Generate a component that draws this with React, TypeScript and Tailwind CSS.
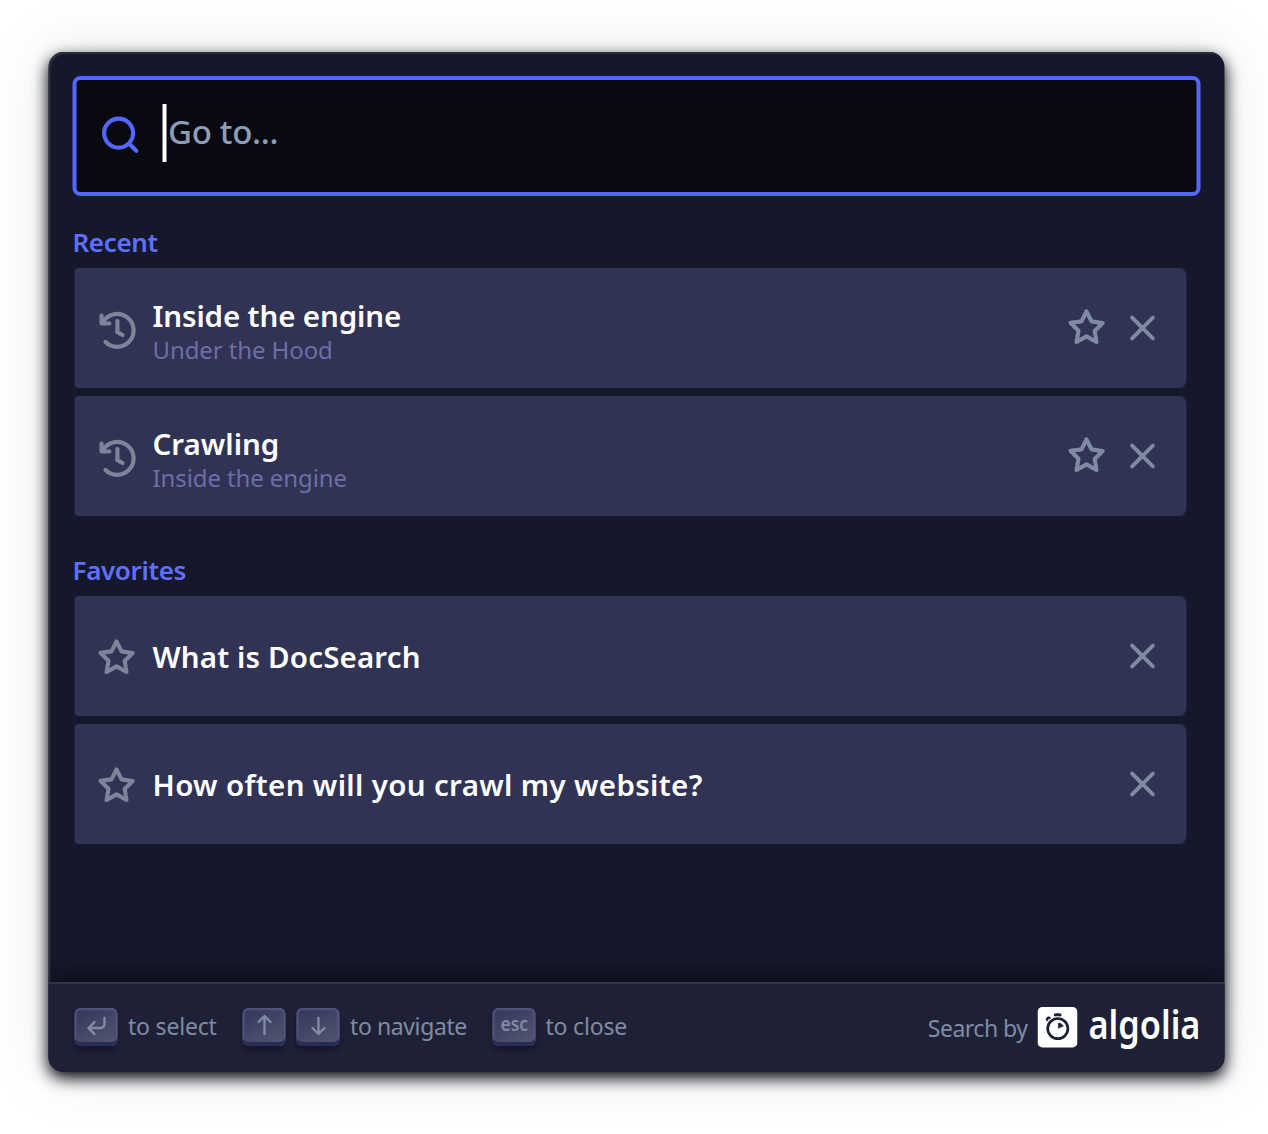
import type { ReactNode } from 'react';

const HistoryIcon = () => (
  <svg width="40" height="40" viewBox="0 0 20 20" fill="none" stroke="currentColor" strokeWidth="2.1" strokeLinecap="round" strokeLinejoin="round">
    <path d="M3.18 6.6a8.23 8.23 0 1112.93 9.94h0a8.23 8.23 0 01-11.63 0" />
    <path d="M6.44 7.25H2.55V3.36M10.45 6v5.6M10.45 11.6L13 13" />
  </svg>
);

const StarIcon = () => (
  <svg width="40" height="40" viewBox="0 0 20 20" fill="none" stroke="currentColor" strokeWidth="2.05" strokeLinejoin="round">
    <path d="M10 14.2L5 17l1-5.6-4-4 5.5-.7 2.5-5 2.5 5 5.6.8-4 4 .9 5.5z" />
  </svg>
);

const CloseIcon = () => (
  <svg width="40" height="40" viewBox="0 0 20 20" fill="none" stroke="currentColor" strokeWidth="1.9" strokeLinecap="round" strokeLinejoin="round">
    <path d="M15.2 4.8L4.8 15.2M4.8 4.8l10.4 10.4" />
  </svg>
);

const SearchIcon = () => (
  <svg width="40" height="40" viewBox="0 0 20 20" fill="none" stroke="currentColor" strokeWidth="2.1" strokeLinecap="round" strokeLinejoin="round">
    <path d="M14.2 14.2l3.7 3.7" />
    <circle cx="9.06" cy="9.06" r="7.25" />
  </svg>
);

const KeyIcon = ({ d }: { d: string }) => (
  <svg width="30" height="30" viewBox="0 0 15 15" fill="none" stroke="currentColor" strokeWidth="1.2" strokeLinecap="round" strokeLinejoin="round">
    <path d={d} />
  </svg>
);

const Key = ({ children }: { children: ReactNode }) => (
  <kbd className="mb-[3px] flex h-[38px] w-[43px] items-center justify-center rounded-[6px] bg-[linear-gradient(-26.5deg,#565872,#31355b)] pb-[2px] font-['Noto_Sans',sans-serif] text-[#7f8ba3] shadow-[inset_0_-4px_0_0_#282d55,inset_0_0_2px_2px_#51577d,0_4px_4px_0_rgba(3,4,9,0.3)]">
    {children}
  </kbd>
);

const AlgoliaLogo = () => (
  <div className="flex items-center text-white">
    <svg className="-mt-[2px]" width="40" height="41" viewBox="0 0 40 41">
      <rect width="40" height="40.5" rx="5" fill="#fff" />
      <circle cx="20.3" cy="21.6" r="10.1" fill="none" stroke="#1e2136" strokeWidth="2.7" />
      <path d="M20.8 21.300v-5.200c2.200.1 4 1.200 5 3z" fill="#1e2136" stroke="#1e2136" strokeWidth=".6" strokeLinejoin="round" />
      <path d="M16.400 9.200V8c0-1 .7-1.700 1.700-1.700h4.200c1 0 1.700.7 1.700 1.700v1.200z" fill="#1e2136" />
      <path d="M9.700 12.800c-.6-1.300.9-2.700 2.300-1.900" fill="none" stroke="#1e2136" strokeWidth="2.400" strokeLinecap="round" />
    </svg>
    <span className="-mt-[9px] ml-[10.5px] inline-block w-[112.5px] origin-left scale-x-[0.88] text-[39px] leading-[54px] font-semibold">algolia</span>
  </div>
);

type Hit = { title: string; subtitle?: string; spacing: string };

const HitRow = ({ hit, favorite }: { hit: Hit; favorite?: boolean }) => (
  <li className="flex h-[120px] items-center rounded-l-[4px] rounded-r-[8px] bg-[#313354] pr-[24px] pl-[22px]">
    <span className={favorite ? 'mt-[4px] text-[#7f849b]' : 'mt-[2px] text-[#7f849b]'}>
      {favorite ? <StarIcon /> : <HistoryIcon />}
    </span>
    <div className={favorite ? 'mt-[2px] ml-[16px] flex-1 whitespace-nowrap' : 'mt-[10px] ml-[16px] flex-1 whitespace-nowrap'}>
      <div className={`text-[29.5px] leading-[34px] font-semibold text-white ${hit.spacing}`}>{hit.title}</div>
      {hit.subtitle && <div className="text-[24px] leading-[34px] tracking-[-0.1px] text-[#6d6ea6]">{hit.subtitle}</div>}
    </div>
    <div className="flex gap-[16px] text-[#7f8ba3]">
      {!favorite && <StarIcon />}
      <CloseIcon />
    </div>
  </li>
);

const Section = ({ label, hits, favorite }: { label: string; hits: Hit[]; favorite?: boolean }) => (
  <section>
    <h2 className="h-[48px] text-[26px] leading-[44px] font-semibold tracking-[-0.35px] text-[#5f70ff]">{label}</h2>
    <ul className="mr-[14px] ml-[2px] flex flex-col gap-2">
      {hits.map((h) => (
        <HitRow key={h.title} hit={h} favorite={favorite} />
      ))}
    </ul>
  </section>
);

export default function App() {
  return (
    <div className="h-[1134px] w-[1268px] overflow-hidden bg-white pt-[52px] pl-[49px] font-['Noto_Sans',sans-serif]">
      <div className="flex h-[1020px] w-[1176px] -translate-x-[0.5px] flex-col overflow-hidden rounded-[15px] bg-[#15172a] shadow-[inset_2px_2px_0_0_#2c2e40,0_6px_16px_0_#000309,0_0_56px_0_rgba(90,110,120,0.18)]">
        <header className="px-[24px] pt-[24px]">
          <div className="flex h-[120px] items-center rounded-[8px] border-4 border-[#5468ff] bg-[#090a11] pl-[24px]">
            <span className="-mt-[3px] text-[#5468ff]"><SearchIcon /></span>
            <span className="-mt-[6px] ml-[22px] h-[58px] w-[4px] bg-white" />
            <span className="-mt-[8px] ml-[1.5px] text-[33px] font-medium tracking-[-0.3px] text-[#8d9db9]">Go to...</span>
          </div>
        </header>
        <main className="flex flex-1 flex-col gap-[32px] px-[24px] pt-[24px]">
          <Section
            label="Recent"
            hits={[
              { title: 'Inside the engine', subtitle: 'Under the Hood', spacing: 'tracking-[-0.13px]' },
              { title: 'Crawling', subtitle: 'Inside the engine', spacing: 'tracking-normal' },
            ]}
          />
          <Section
            label="Favorites"
            favorite
            hits={[
              { title: 'What is DocSearch', spacing: 'tracking-[0.15px]' },
              { title: 'How often will you crawl my website?', spacing: 'tracking-[0.34px]' },
            ]}
          />
        </main>
        <footer className="relative flex h-[88px] shrink-0 items-center bg-[#1e2136] pr-[24px] pl-[25.5px] text-[23px] whitespace-nowrap text-[#7f8ba3] shadow-[0_-2px_0_0_#31344f,0_-8px_16px_0_rgba(0,0,0,0.4)]">
          <Key><KeyIcon d="M12 3.53088v3c0 1-1 2-2 2H4M7 11.53088l-3-3 3-3" /></Key>
          <span className="-mt-[4px] ml-[11px] w-[114.5px] tracking-[-0.2px]">to select</span>
          <Key><KeyIcon d="M7.5 11.5v-8M10.5 5.5l-3-3-3 3" /></Key>
          <span className="w-[11px]" />
          <Key><KeyIcon d="M7.5 3.5v8M10.5 8.5l-3 3-3-3" /></Key>
          <span className="-mt-[4px] ml-[10.5px] w-[142.5px] tracking-[-0.4px]">to navigate</span>
          <Key><span className="-mt-[3px] inline-block scale-x-[0.88] text-[20px] font-semibold">esc</span></Key>
          <span className="-mt-[4px] ml-[10px] tracking-[-0.2px]">to close</span>
          <div className="ml-auto flex items-center">
            <span className="mr-[10px] tracking-[-0.5px]">Search by</span>
            <AlgoliaLogo />
          </div>
        </footer>
      </div>
    </div>
  );
}
